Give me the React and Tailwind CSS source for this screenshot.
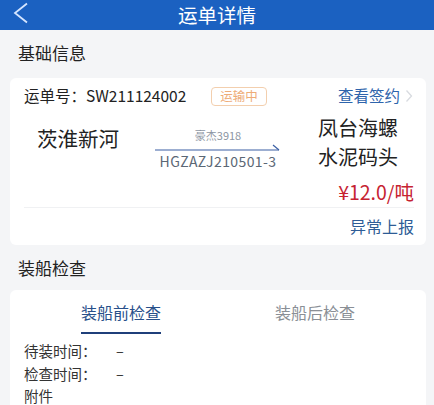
const font = { fontFamily: '"Noto Sans CJK SC", "Noto Sans", sans-serif' };

const App = () => {
  return (
    <div className="w-[434px] h-[405px] overflow-hidden bg-[#f4f5f7] text-[#222]" style={font}>
      {/* HEADER */}
      <div className="relative h-[30px] bg-[#1b61c1] flex items-start justify-center">
        <svg className="absolute left-[12px] top-[2px]" width="18" height="23" viewBox="0 0 18 23">
          <polyline points="15,1.5 3,11 15,20.5" fill="none" stroke="#d4e5ff" strokeWidth="1.8" />
        </svg>
        <div className="text-white text-[19.5px] leading-[29px]">运单详情</div>
      </div>

      {/* BASIC INFO */}
      <div className="px-[18px] pt-[11px] pb-[13px] text-[17px] leading-[24px]">基础信息</div>
      <div className="mx-[10px] mr-[8px] bg-white rounded-[6px] pl-[14px] pr-[12px] pt-[7px] pb-[8px]">
        <div className="flex items-center h-[22px]">
          <div className="text-[15.5px]">运单号：SW211124002</div>
          <div className="ml-[25px] h-[19px] px-[8px] flex items-center rounded-[4px] border border-[#f3cfae] text-[#eeac78] text-[12.5px]">
            运输中
          </div>
          <div className="ml-auto flex items-center text-[15.5px] text-[#2e64ac]">
            查看签约
            <svg className="ml-[5px] mr-[1px]" width="8" height="14" viewBox="0 0 8 14">
              <polyline points="1.5,1.5 6.5,7 1.5,12.5" fill="none" stroke="#d8dbe0" strokeWidth="1.3" />
            </svg>
          </div>
        </div>

        <div className="flex items-center mt-[6px]">
          <div className="w-[130px] pl-[13px] pb-[8px] text-[20.5px]">茨淮新河</div>
          <div className="w-[128px] flex flex-col items-center pt-[14px]">
            <div className="text-[11px] text-[#8d96a3] leading-[14px]">豪杰3918</div>
            <svg width="126" height="9" viewBox="0 0 126 9" className="my-[1px]">
              <line x1="0" y1="7" x2="124" y2="7" stroke="#3b5fa4" strokeWidth="1.2" />
              <line x1="118" y1="2" x2="124" y2="7" stroke="#3b5fa4" strokeWidth="1.2" />
            </svg>
            <div className="text-[14px] tracking-[0.4px] text-[#5b6775] leading-[17px] whitespace-nowrap">
              HGZAZJ210501-3
            </div>
          </div>
          <div className="ml-auto w-[96px] text-[20px] leading-[29px]">
            凤台海螺
            <br />
            水泥码头
          </div>
        </div>

        <div className="text-right text-[19.5px] text-[#c62332] mt-[9px] leading-[24px]">¥12.0/吨</div>
        <div className="h-px bg-[#f0f1f3] mt-[3px]" />
        <div className="text-right text-[16px] text-[#2e5c96] mt-[7px] leading-[22px]">异常上报</div>
      </div>

      {/* LOADING CHECK */}
      <div className="px-[18px] pt-[11px] pb-[10px] text-[17px] leading-[24px]">装船检查</div>
      <div className="mx-[10px] mr-[8px] bg-white rounded-t-[6px] px-[14px]">
        <div className="flex pt-[11px]">
          <div className="flex-1 flex flex-col items-center">
            <div className="text-[16px] text-[#28508a] leading-[22px]">装船前检查</div>
            <div className="w-[80px] h-[2px] bg-[#1f3f7a] mt-[9px]" />
          </div>
          <div className="flex-1 flex justify-center text-[16px] text-[#8a8f96] leading-[22px]">
            装船后检查
          </div>
        </div>
        <div className="pt-[6px] text-[14.5px] text-[#333] leading-[22.5px]">
          <div className="flex">
            <span className="w-[92px]">待装时间：</span>
            <span>–</span>
          </div>
          <div className="flex">
            <span className="w-[92px]">检查时间：</span>
            <span>–</span>
          </div>
          <div>附件</div>
        </div>
      </div>
    </div>
  );
};

export default App;
